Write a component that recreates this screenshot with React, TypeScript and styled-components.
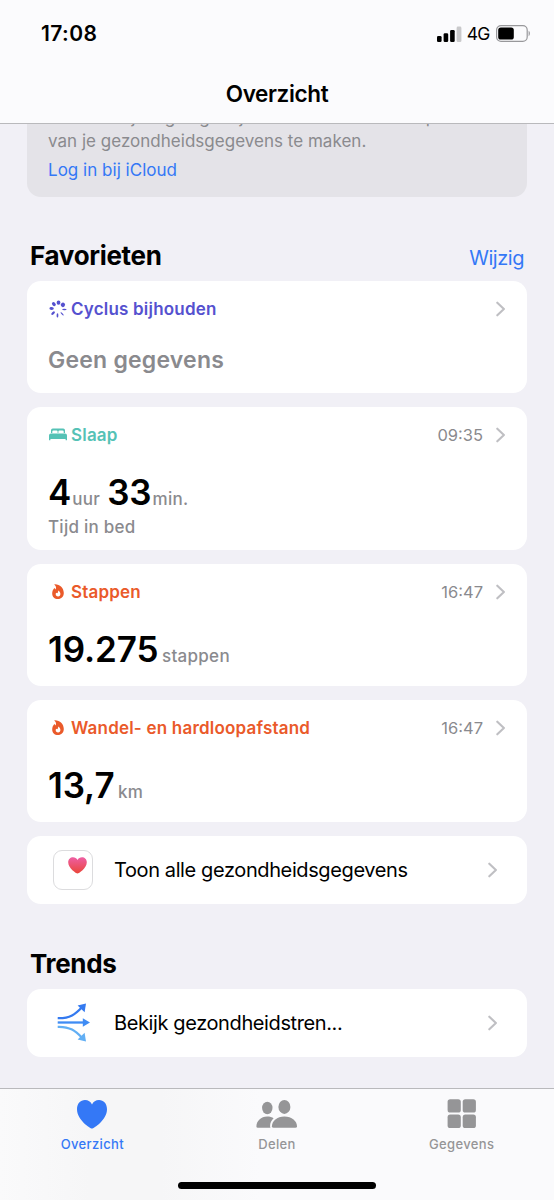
import React from "react";
import styled, { createGlobalStyle } from "styled-components";

const GlobalStyle = createGlobalStyle`
  * { box-sizing: border-box; }
  body { margin: 0; background: #f1f0f6; }
  h1, h2, p { margin: 0; }
`;

const Screen = styled.div`
  display: flex;
  flex-direction: column;
  width: 554px;
  height: 1200px;
  overflow: hidden;
  background: #f1f0f6;
  color: #000;
  font-family: Inter, "Liberation Sans", sans-serif;
`;

const Header = styled.header`
  flex: none;
  height: 124px;
  background: #fbfbfd;
  border-bottom: 1px solid #b9b9bc;
`;

const StatusBar = styled.div`
  display: flex;
  align-items: center;
  justify-content: space-between;
  height: 67px;
  padding: 0 23px 0 41px;
`;

const Clock = styled.span`
  font-size: 21px;
  font-weight: 600;
  letter-spacing: 0.4px;
`;

const StatusIcons = styled.div`
  display: flex;
  align-items: center;
`;

const Network = styled.span`
  margin: 0 6.5px 0 5px;
  font-size: 17.5px;
  font-weight: 400;
  letter-spacing: -0.8px;
`;

const Title = styled.h1`
  height: 54px;
  line-height: 54px;
  text-align: center;
  font-size: 22.5px;
  font-weight: 600;
  letter-spacing: -0.35px;
`;

const Content = styled.main`
  display: flex;
  flex: 1;
  flex-direction: column;
  min-height: 0;
  padding: 0 27px;
  overflow: hidden;
`;

const Notice = styled.section`
  display: flex;
  flex: none;
  flex-direction: column;
  height: 117px;
  margin-top: -44px;
  padding: 26px 21px 0;
  border-radius: 14px;
  background: #e4e3e8;
`;

const NoticeText = styled.p`
  line-height: 23.5px;
  font-size: 17px;
  letter-spacing: 0.02px;
  color: #8a8a8e;
`;

const NoticeLink = styled.a`
  margin-top: 6px;
  line-height: 23.5px;
  font-size: 17px;
  letter-spacing: 0.02px;
  color: #3478f6;
`;

const SectionHead = styled.div<{ $top: number }>`
  display: flex;
  flex: none;
  align-items: center;
  justify-content: space-between;
  height: 36px;
  margin-top: ${(p) => p.$top}px;
  padding: 0 3px;
`;

const SectionTitle = styled.h2`
  padding-bottom: 1.5px;
  font-size: 26px;
  font-weight: 700;
  letter-spacing: -0.32px;
`;

const EditLink = styled.a`
  padding-top: 4px;
  color: #3478f6;
  font-size: 20px;
  letter-spacing: -0.45px;
`;

const CardList = styled.div`
  display: flex;
  flex: none;
  flex-direction: column;
  gap: 14px;
  margin-top: 7px;
`;

const Card = styled.section<{ $height: number }>`
  height: ${(p) => p.$height}px;
  padding: 16px 21px 0;
  border-radius: 14px;
  background: #fff;
`;

const CardHead = styled.div<{ $color: string }>`
  display: flex;
  align-items: center;
  height: 24px;
  color: ${(p) => p.$color};
`;

const IconSlot = styled.span`
  display: flex;
  flex: none;
  justify-content: center;
  width: 18px;
  margin: 0 4px 0 1px;
`;

const Label = styled.span`
  flex: 1;
  font-size: 17px;
  font-weight: 600;
  letter-spacing: 0.2px;
`;

const Time = styled.span`
  margin-right: 13px;
  color: #8a8a8e;
  font-size: 16.5px;
`;

const Empty = styled.p`
  margin-top: 24px;
  line-height: 30px;
  color: #8a8a8e;
  font-size: 23px;
  font-weight: 600;
  letter-spacing: 0.22px;
`;

const Metric = styled.div`
  display: flex;
  align-items: baseline;
  height: 44px;
  margin-top: 23px;
  line-height: 44px;
`;

const Value = styled.span`
  font-size: 35px;
  font-weight: 600;
  letter-spacing: -0.1px;
`;

const Unit = styled.span<{ $gap?: number }>`
  margin: 0 7px 0 ${(p) => p.$gap ?? 3.5}px;
  color: #8a8a8e;
  font-size: 17px;
  font-weight: 500;
  letter-spacing: 0.3px;
`;

const Caption = styled.p`
  padding-top: 1px;
  line-height: 24px;
  color: #8a8a8e;
  font-size: 17px;
  font-weight: 500;
  letter-spacing: 0.25px;
`;

const LinkRow = styled.section`
  display: flex;
  align-items: center;
  height: 68px;
  padding: 0 29px 0 26px;
  border-radius: 14px;
  background: #fff;
`;

const RowIcon = styled.span<{ $inset?: number }>`
  display: flex;
  flex: none;
  width: 61px;
  padding-left: ${(p) => p.$inset ?? 0}px;
`;

const HealthBadge = styled.span`
  display: flex;
  width: 40px;
  height: 40px;
  padding: 6px 0 0 14px;
  border: 1px solid #dcdcde;
  border-radius: 9px;
`;

const RowText = styled.span`
  flex: 1;
  font-size: 20px;
  letter-spacing: -0.39px;
  white-space: nowrap;
`;

const TabBar = styled.nav`
  display: flex;
  flex: none;
  flex-direction: column;
  align-items: center;
  height: 112px;
  border-top: 1px solid #b9b9bc;
  background: linear-gradient(90deg, #fafafb 0, #f6f6f7 90px, #f6f6f7 160px, #fafafc 260px, #fafafc 100%);
`;

const Tabs = styled.div`
  display: grid;
  grid-template-columns: repeat(3, 1fr);
  width: 100%;
  height: 93px;
`;

const Tab = styled.div<{ $active?: boolean }>`
  display: flex;
  flex-direction: column;
  align-items: center;
  padding-top: 9px;
  color: ${(p) => (p.$active ? "#3478f6" : "#959597")};
`;

const TabLabel = styled.span`
  margin-top: 5px;
  line-height: 18px;
  font-size: 13px;
  font-weight: 500;
  letter-spacing: 0.35px;
`;

const HomeIndicator = styled.div`
  width: 198px;
  height: 7px;
  border-radius: 4px;
  background: #000;
`;

const Chevron = () => (
  <svg width="10" height="16" viewBox="0 0 10 16" fill="none">
    <path d="M1.3 1.7 7.9 8 1.3 14.3" stroke="#bfbfc3" strokeWidth="2.1" strokeLinecap="round" strokeLinejoin="round" />
  </svg>
);

const Signal = () => (
  <svg width="25" height="16" viewBox="0 0 25 16">
    <rect x="0" y="10" width="4.6" height="6" rx="1.3" />
    <rect x="6.6" y="7.2" width="4.6" height="8.8" rx="1.3" />
    <rect x="13.1" y="4" width="4.6" height="12" rx="1.3" />
    <rect x="19.6" y="0.6" width="4.8" height="15.4" rx="1.3" fill="#c9c9cb" />
  </svg>
);

const Battery = () => (
  <svg width="35" height="17" viewBox="0 0 35 17">
    <rect x="0.6" y="0.6" width="30.6" height="15.8" rx="4.4" fill="none" stroke="#98989b" strokeWidth="1.2" />
    <rect x="2.2" y="2.5" width="15.6" height="12" rx="2.6" />
    <path d="M32.6 5.8c1.7.7 1.7 4.7 0 5.4z" fill="#98989b" />
  </svg>
);

const CycleIcon = () => {
  const dots = [1.9, 2.1, 0.65, 0.65, 0.9, 1.15, 1.4, 1.65];
  return (
    <svg width="18" height="18" viewBox="-9 -9 18 18" fill="currentColor">
      {dots.map((w, i) => (
        <ellipse key={i} cx="0.3" cy="-6.4" rx={w} ry={2.2} transform={`rotate(${i * 45 + 2})`} />
      ))}
    </svg>
  );
};

const BedIcon = () => (
  <svg width="18" height="14" viewBox="0 0 18 14" fill="currentColor">
    <path d="M2 5V2.2Q2 .5 3.8 .5H14.2Q16 .5 16 2.2V5H14.7V3.6Q14.7 2.4 13.5 2.4H10.6Q9.4 2.4 9.4 3.6V5H8.6V3.6Q8.6 2.4 7.4 2.4H4.5Q3.3 2.4 3.3 3.6V5Z" />
    <path d="M0 11.9V7.6Q0 5.6 2 5.6H16Q18 5.6 18 7.6V11.9Q18 12.3 17.6 12.3H17Q16.6 12.3 16.6 11.9V10.9H1.4V11.9Q1.4 12.3 1 12.3H.4Q0 12.3 0 11.9Z" />
  </svg>
);

const FlameIcon = () => (
  <svg width="12" height="16" viewBox="0 0 12 16">
    <path d="M3 .2C8 .3 11.8 4 11.8 9C11.8 12.6 9.4 15 6 15C2.5 15 .2 12.7 .2 9.4C.2 7.3 1 5.6 2 4.5C2.4 4.1 2.9 4.2 3.1 4.7L3.5 5.6C4.4 4.2 4.2 2.2 2.7 1C2.2 .6 2.3 .2 3 .2Z" fill="currentColor" />
    <path d="M6.2 6.6C7.8 7.6 8.4 8.8 8.4 10.1C8.4 11.6 7.5 12.5 6.1 12.5C4.7 12.5 3.7 11.6 3.7 10.3C3.7 9.6 3.9 9.1 4.3 8.8C4.5 9.1 4.8 9.3 5.2 9.3C6 8.8 6.3 7.7 6.2 6.6Z" fill="#fff" />
  </svg>
);

const SmallHeart = () => (
  <svg width="19" height="17" viewBox="0 0 19 17">
    <defs>
      <linearGradient id="pinkRed" x1="0" y1="0" x2="0" y2="1">
        <stop offset="0" stopColor="#ee5fa4" />
        <stop offset="1" stopColor="#ea4538" />
      </linearGradient>
    </defs>
    <path d="M9.5 16.6C8.4 16.6 .2 11.3 .2 5.3C.2 2.3 2.4 .3 5 .3C7 .3 8.6 1.3 9.5 3C10.4 1.3 12 .3 14 .3C16.6 .3 18.8 2.3 18.8 5.3C18.8 11.3 10.6 16.6 9.5 16.6Z" fill="url(#pinkRed)" />
  </svg>
);

const TrendIcon = () => (
  <svg width="34" height="40" viewBox="0 0 34 40" fill="none" strokeWidth="2.3">
    <path d="M1.7 15.2C14 15.6 19.5 11 26 4.2" stroke="#347af0" />
    <path d="M21.6 2.4 30 .6 28.6 9.2Z" fill="#347af0" />
    <path d="M1.7 19.5H29" stroke="#3f8cf4" />
    <path d="M26.8 15.2 34 19.5 26.8 23.8Z" fill="#3f8cf4" />
    <path d="M1.7 23.8C14 23.4 19.5 28 26 34.8" stroke="#62aff4" />
    <path d="M21.6 36.6 30 38.4 28.6 29.8Z" fill="#62aff4" />
  </svg>
);

const HeartTab = () => (
  <svg width="32" height="32" viewBox="0 0 32 32" fill="currentColor">
    <path d="M16 30.6C14.3 30.6 1 21.8 1 11.2C1 5.7 4.4 2 9 2C12.2 2 14.7 3.7 16 6.4C17.3 3.7 19.8 2 23 2C27.6 2 31 5.7 31 11.2C31 21.8 17.7 30.6 16 30.6Z" />
  </svg>
);

const PeopleTab = () => (
  <svg width="42" height="32" viewBox="0 0 42 32" fill="currentColor">
    <ellipse cx="11.3" cy="10" rx="5.2" ry="6.2" />
    <path d="M.4 28.6C.4 23 5 18.6 11.2 18.6C13.8 18.6 16 19.2 17.6 20.3C15.4 22.4 14.1 25.1 14.1 28C14.1 29 14.3 29.4 14.5 29.8H1.8Q.4 29.8 .4 28.6Z" />
    <ellipse cx="28.4" cy="8.9" rx="6" ry="7" />
    <path d="M15.9 28.2C15.9 23 21 18.4 28.4 18.4C35.8 18.4 41 23 41 28.2Q41 29.8 39.2 29.8H17.7Q15.9 29.8 15.9 28.2Z" />
  </svg>
);

const GridTab = () => (
  <svg width="30" height="32" viewBox="0 0 30 32" fill="currentColor">
    <rect x="0.6" y="1.2" width="13.2" height="13.4" rx="2.6" />
    <rect x="15.7" y="1.2" width="13.2" height="13.4" rx="2.6" />
    <rect x="0.6" y="16.6" width="13.2" height="13.4" rx="2.6" />
    <rect x="15.7" y="16.6" width="13.2" height="13.4" rx="2.6" />
  </svg>
);

export default function App() {
  return (
    <Screen>
      <GlobalStyle />
      <Header>
        <StatusBar>
          <Clock>17:08</Clock>
          <StatusIcons>
            <Signal />
            <Network>4G</Network>
            <Battery />
          </StatusIcons>
        </StatusBar>
        <Title>Overzicht</Title>
      </Header>
      <Content>
        <Notice>
          <NoticeText>
            Je moet zijn ingelogd bij iCloud om een back-up
            <br />
            van je gezondheidsgegevens te maken.
          </NoticeText>
          <NoticeLink>Log in bij iCloud</NoticeLink>
        </Notice>
        <SectionHead $top={41}>
          <SectionTitle>Favorieten</SectionTitle>
          <EditLink>Wijzig</EditLink>
        </SectionHead>
        <CardList>
          <Card $height={112}>
            <CardHead $color="#5551cf">
              <IconSlot><CycleIcon /></IconSlot>
              <Label>Cyclus bijhouden</Label>
              <Chevron />
            </CardHead>
            <Empty>Geen gegevens</Empty>
          </Card>
          <Card $height={143}>
            <CardHead $color="#55c2b6">
              <IconSlot><BedIcon /></IconSlot>
              <Label>Slaap</Label>
              <Time>09:35</Time>
              <Chevron />
            </CardHead>
            <Metric>
              <Value>4</Value>
              <Unit $gap={1}>uur</Unit>
              <Value>33</Value>
              <Unit $gap={1}>min.</Unit>
            </Metric>
            <Caption>Tijd in bed</Caption>
          </Card>
          <Card $height={122}>
            <CardHead $color="#ea5a2a">
              <IconSlot><FlameIcon /></IconSlot>
              <Label>Stappen</Label>
              <Time>16:47</Time>
              <Chevron />
            </CardHead>
            <Metric>
              <Value>19.275</Value>
              <Unit>stappen</Unit>
            </Metric>
          </Card>
          <Card $height={122}>
            <CardHead $color="#ea5a2a">
              <IconSlot><FlameIcon /></IconSlot>
              <Label>Wandel- en hardloopafstand</Label>
              <Time>16:47</Time>
              <Chevron />
            </CardHead>
            <Metric>
              <Value>13,7</Value>
              <Unit>km</Unit>
            </Metric>
          </Card>
          <LinkRow>
            <RowIcon><HealthBadge><SmallHeart /></HealthBadge></RowIcon>
            <RowText>Toon alle gezondheidsgegevens</RowText>
            <Chevron />
          </LinkRow>
        </CardList>
        <SectionHead $top={42}>
          <SectionTitle>Trends</SectionTitle>
        </SectionHead>
        <CardList>
          <LinkRow>
            <RowIcon $inset={3}><TrendIcon /></RowIcon>
            <RowText>Bekijk gezondheidstren...</RowText>
            <Chevron />
          </LinkRow>
        </CardList>
      </Content>
      <TabBar>
        <Tabs>
          <Tab $active><HeartTab /><TabLabel>Overzicht</TabLabel></Tab>
          <Tab><PeopleTab /><TabLabel>Delen</TabLabel></Tab>
          <Tab><GridTab /><TabLabel>Gegevens</TabLabel></Tab>
        </Tabs>
        <HomeIndicator />
      </TabBar>
    </Screen>
  );
}
